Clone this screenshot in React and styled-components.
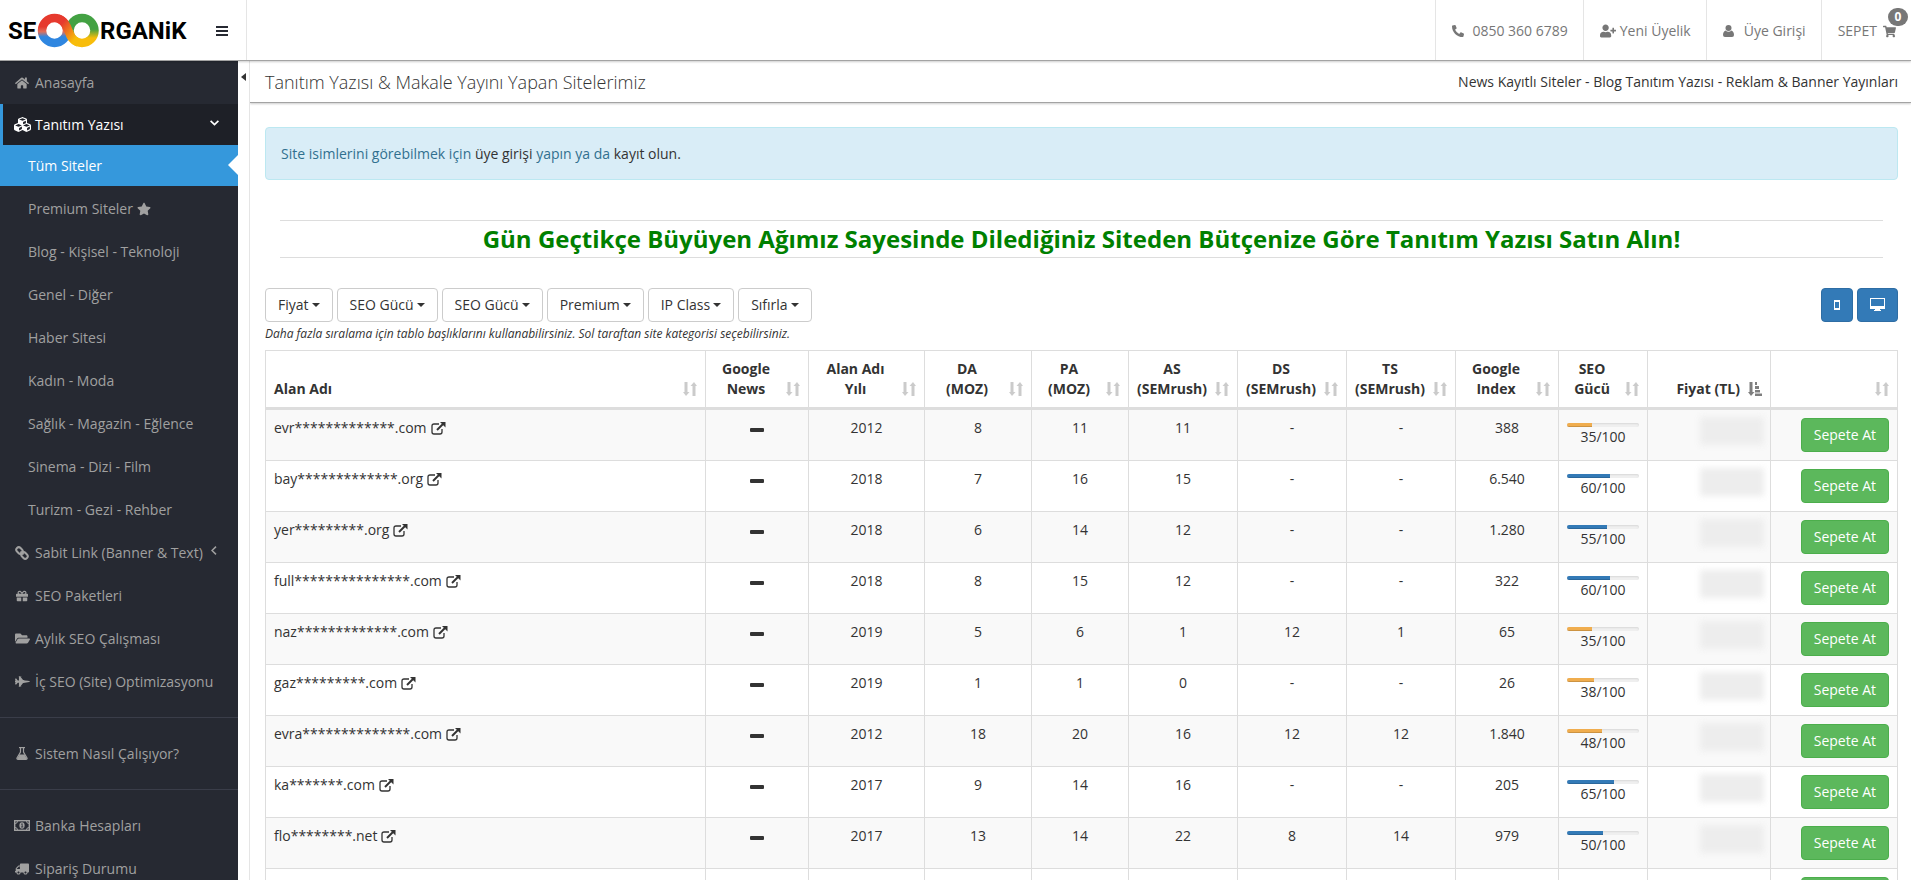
import React from 'react'
import styled, { createGlobalStyle } from 'styled-components'
import {
    FaHome, FaCubes, FaStar, FaGift, FaFolderOpen, FaFighterJet,
    FaTruck, FaUserPlus, FaPhoneAlt, FaShoppingCart,
} from 'react-icons/fa'

const GlobalStyle = createGlobalStyle`
    * {
        box-sizing: border-box;
    }
    body {
        margin: 0;
        overflow-x: hidden;
        background-color: #fff;
        color: #333;
        font-family: "Open Sans", "Noto Sans", sans-serif;
        font-size: 14px;
        line-height: 20px;
    }
    a {
        color: inherit;
        text-decoration: none;
    }
    svg {
        display: block;
        flex: none;
    }
`

const Page = styled.div`
    height: 100vh;
    display: flex;
    flex-direction: column;
    overflow: hidden;
`
const Header = styled.header`
    position: relative;
    z-index: 2;
    height: 61px;
    flex: none;
    display: flex;
    justify-content: space-between;
    border-bottom: 1px solid #a3a3a3;
    box-shadow: 0 1px 2px rgba(0, 0, 0, 0.2);
`
const Brand = styled.div`
    width: 247px;
    display: flex;
    align-items: center;
    justify-content: space-between;
    padding: 2px 18px 0 8px;
    border-right: 1px solid #e5e5e5;
`
const MenuButton = styled.button`
    display: flex;
    padding: 0;
    border: 0;
    background: none;
`
const TopNav = styled.nav`
    display: flex;
`
const TopLink = styled.a`
    position: relative;
    display: flex;
    align-items: center;
    gap: ${props => props.$gap || 8}px;
    padding: 2px 15px 0 16px;
    border-left: 1px solid #e5e5e5;
    color: #777;
`
const Badge = styled.span`
    position: absolute;
    top: 8px;
    right: 3px;
    width: 20px;
    height: 18px;
    border-radius: 10px;
    background-color: #777;
    color: #fff;
    font-size: 12px;
    font-weight: 700;
    line-height: 18px;
    text-align: center;
`

const Body = styled.div`
    flex: 1;
    display: flex;
    min-height: 0;
`
const Sidebar = styled.nav`
    width: 238px;
    flex: none;
    overflow: hidden;
    background-color: #262932;
`
const SideItem = styled.a`
    position: relative;
    display: flex;
    align-items: center;
    height: ${props => props.$open || props.$current ? 41 : 43}px;
    margin-bottom: ${props => props.$current ? 1 : 0}px;
    padding-left: ${props => props.$sub ? 28 : props.$open ? 9 : 12}px;
    border-left: ${props => props.$open ? "3px solid #3598dc" : "0"};
    background-color: ${props => props.$current ? "#3598dc" : props.$open ? "#1e2027" : "transparent"};
    color: ${props => props.$current || props.$open ? "#fff" : "#a0a0a0"};

    &::after {
        content: "";
        display: ${props => props.$current ? "block" : "none"};
        position: absolute;
        right: 0;
        top: 10px;
        border: 10px solid transparent;
        border-left: 0;
        border-right-color: #fff;
    }
`
const SideIcon = styled.span`
    width: 20px;
    margin-right: 3px;
    display: flex;
    justify-content: center;
    font-size: 14px;
`
const SideStar = styled(FaStar)`
    margin-left: 4px;
`
const Truck = styled(FaTruck)`
    transform: scaleX(-1);
`
const SideArrow = styled.span`
    display: flex;
    margin-left: auto;
    padding: 0 ${props => props.$open ? 19 : 21}px 4px 0;
`
const Divider = styled.div`
    height: 1px;
    margin: 14px 0;
    background-color: #3a3d49;
`

const Gutter = styled.div`
    width: 11px;
    flex: none;
    padding: 11px 0 0 3px;
`
const Collapse = styled.button`
    display: block;
    width: 5px;
    height: 10px;
    padding: 0;
    border: 0;
    background: none;

    &::before {
        content: "";
        display: block;
        border: 4px solid transparent;
        border-left: 0;
        border-right: 5px solid #333;
    }
`
const Main = styled.main`
    flex: 1;
    min-width: 0;
    overflow: hidden;
    border-left: 1px solid #e5e5e5;
`
const TitleBar = styled.div`
    height: 42px;
    display: flex;
    align-items: center;
    justify-content: space-between;
    padding: 0 13px 0 15px;
    border-bottom: 1px solid #a3a3a3;
    box-shadow: 0 1px 2px rgba(0, 0, 0, 0.2);
`
const Title = styled.h1`
    margin: 0;
    font-size: 18px;
    font-weight: 300;
`
const Content = styled.div`
    padding: 24px 13px 0 15px;
`
const Alert = styled.div`
    padding: 16px 15px 15px;
    border: 1px solid #bce8f1;
    border-radius: 4px;
    background-color: #d9edf7;
    color: #31708f;

    a {
        color: #333;
    }
`
const Slogan = styled.h2`
    margin: 40px 15px 30px;
    padding: 2px 0;
    border: 1px solid #ddd;
    border-width: 1px 0;
    color: green;
    font-size: 24px;
    font-weight: 700;
    line-height: 32px;
    text-align: center;
`
const Toolbar = styled.div`
    display: flex;
    justify-content: space-between;
`
const Group = styled.div`
    display: flex;
    gap: 4px;
`
const Button = styled.button`
    height: 34px;
    display: inline-flex;
    align-items: center;
    padding: 0 12px;
    border: 1px solid ${props => props.$border || "#ccc"};
    border-radius: 4px;
    background-color: ${props => props.$bg || "#fff"};
    color: ${props => props.$bg ? "#fff" : "#333"};
    font-family: inherit;
    font-size: 14px;
    line-height: 20px;
`
const Caret = styled.span`
    margin-left: 3px;
    border: 4px solid transparent;
    border-top-color: #333;
    border-bottom: 0;
`
const Hint = styled.p`
    margin: 3px 0 7px;
    font-size: 12px;
    font-style: italic;
    line-height: 18px;
`

const Table = styled.table`
    width: 100%;
    table-layout: fixed;
    border-collapse: separate;
    border-spacing: 0;
    border: 1px solid #ddd;
    border-width: 1px 0 0 1px;
`
const Th = styled.th`
    position: relative;
    padding: 8px 30px 8px 8px;
    border: 1px solid #ddd;
    border-width: 0 1px 3px 0;
    text-align: ${props => props.$align || "center"};
    vertical-align: bottom;
    font-weight: 700;
    white-space: pre-line;
`
const SortMark = styled.svg`
    position: absolute;
    right: 8px;
    bottom: 11px;
    opacity: ${props => props.$active ? 0.5 : 0.2};
`
const Row = styled.tr`
    background-color: ${props => props.$odd ? "#f9f9f9" : "#fff"};
`
const Td = styled.td`
    height: 51px;
    padding: 8px;
    border: 1px solid #ddd;
    border-width: 0 1px 1px 0;
    text-align: ${props => props.$align || "center"};
    vertical-align: top;
`
const SiteLink = styled.a`
    display: inline-flex;
    align-items: center;
    gap: 4px;
`
const Minus = styled.span`
    display: block;
    width: 14px;
    height: 4px;
    margin: 10px auto 0;
    border-radius: 1px;
    background-color: #333;
`
const Progress = styled.div`
    height: 4px;
    margin-top: 5px;
    overflow: hidden;
    border-radius: 2px;
    background-color: #f0f0f0;
    box-shadow: inset 0 1px 2px rgba(0, 0, 0, 0.1);
`
const Bar = styled.div`
    height: 100%;
    background-color: ${props => props.$low ? "#f0ad4e" : "#337ab7"};
    box-shadow: inset 0 -1px 0 rgba(0, 0, 0, 0.15);
`
const HiddenPrice = styled.span`
    display: block;
    width: 64px;
    height: 28px;
    margin: -1px -2px 0 auto;
    background-color: #ededed;
    filter: blur(3px);
`

const columns = [
    { label: "Alan Adı", align: "left" },
    { label: "Google\nNews", width: 103 },
    { label: "Alan Adı\nYılı", width: 116 },
    { label: "DA\n(MOZ)", width: 107 },
    { label: "PA\n(MOZ)", width: 97 },
    { label: "AS\n(SEMrush)", width: 109 },
    { label: "DS\n(SEMrush)", width: 109 },
    { label: "TS\n(SEMrush)", width: 109 },
    { label: "Google\nIndex", width: 103 },
    { label: "SEO\nGücü", width: 89 },
    { label: "Fiyat (TL)", width: 123, align: "right", active: true },
    { label: "", width: 127 },
]

const sites = [
    { name: "evr*************.com", data: ["2012", "8", "11", "11", "-", "-", "388"], power: 35 },
    { name: "bay*************.org", data: ["2018", "7", "16", "15", "-", "-", "6.540"], power: 60 },
    { name: "yer*********.org", data: ["2018", "6", "14", "12", "-", "-", "1.280"], power: 55 },
    { name: "full***************.com", data: ["2018", "8", "15", "12", "-", "-", "322"], power: 60 },
    { name: "naz*************.com", data: ["2019", "5", "6", "1", "12", "1", "65"], power: 35 },
    { name: "gaz*********.com", data: ["2019", "1", "1", "0", "-", "-", "26"], power: 38 },
    { name: "evra**************.com", data: ["2012", "18", "20", "16", "12", "12", "1.840"], power: 48 },
    { name: "ka*******.com", data: ["2017", "9", "14", "16", "-", "-", "205"], power: 65 },
    { name: "flo********.net", data: ["2017", "13", "14", "22", "8", "14", "979"], power: 50 },
    { name: "", data: ["", "", "", "", "", "", ""] },
]

const categories = [
    "Blog - Kişisel - Teknoloji",
    "Genel - Diğer",
    "Haber Sitesi",
    "Kadın - Moda",
    "Sağlık - Magazin - Eğlence",
    "Sinema - Dizi - Film",
    "Turizm - Gezi - Rehber",
]

const filters = ["Fiyat", "SEO Gücü", "SEO Gücü", "Premium", "IP Class", "Sıfırla"]

const LogoText = styled.text`
    font-family: Roboto, "Liberation Sans", sans-serif;
    font-size: 24px;
    font-weight: 700;
`

const Logo = () => (
    <svg width="182" height="36" viewBox="0 0 182 36" role="img" aria-label="SEO Organik">
        <defs>
            <linearGradient id="left" x1="0" y1="0" x2="0" y2="1">
                <stop offset="0.350" stopColor="#e63a2e" />
                <stop offset="0.550" stopColor="#e0705c" />
                <stop offset="0.750" stopColor="#2f86e0" />
            </linearGradient>
            <linearGradient id="right" x1="0" y1="0" x2="0" y2="1">
                <stop offset="0.450" stopColor="#43a143" />
                <stop offset="0.800" stopColor="#f8bd0b" />
            </linearGradient>
            <linearGradient id="cross" x1="0" y1="0" x2="1" y2="1">
                <stop offset="0.200" stopColor="#e63a2e" />
                <stop offset="0.850" stopColor="#f8bd0b" />
            </linearGradient>
        </defs>
        <circle cx="46.500" cy="17.500" r="12.500" fill="none" stroke="url(#left)" strokeWidth="8.500" />
        <circle cx="74" cy="17.500" r="12.500" fill="none" stroke="url(#right)" strokeWidth="8.500" />
        <path d="M50 5.500C63 10 58 25 70 29.500" fill="none" stroke="url(#cross)" strokeWidth="8.500" />
        <LogoText x="0" y="26">SE</LogoText>
        <LogoText x="92" y="26">RGANiK</LogoText>
    </svg>
)

const BarsIcon = () => (
    <svg width="12" height="10" viewBox="0 0 12 10" fill="#262932">
        <path d="M0 0H12V2H0ZM0 4H12V6H0ZM0 8H12V10H0Z" />
    </svg>
)

const UserIcon = () => (
    <svg width="11" height="12" viewBox="0 0 11 12" fill="currentColor">
        <circle cx="5.500" cy="3" r="3" />
        <path d="M2.500 5.500Q5.500 8 8.500 5.500Q11 6.500 11 10Q11 12 9 12H2Q0 12 0 10Q0 6.500 2.500 5.500Z" />
    </svg>
)

const ChainIcon = () => (
    <svg width="14" height="14" viewBox="0 0 14 14" fill="none" stroke="currentColor" strokeWidth="2">
        <rect x="1" y="2" width="7" height="5" rx="2.500" transform="rotate(45 4.500 4.500)" />
        <rect x="6" y="7" width="7" height="5" rx="2.500" transform="rotate(45 9.500 9.500)" />
        <path d="M5.500 5.500L8.500 8.500" />
    </svg>
)

const FlaskIcon = () => (
    <svg width="12" height="13" viewBox="0 0 12 13">
        <path d="M3 0.600H9" stroke="currentColor" strokeWidth="1.200" />
        <path d="M4.500 1V5L1 11Q0.500 12.300 2 12.300H10Q11.500 12.300 11 11L7.500 5V1" fill="none" stroke="currentColor" strokeWidth="1.200" />
        <path d="M3.500 7.500H8.500L11 12H1Z" fill="currentColor" />
    </svg>
)

const MoneyIcon = () => (
    <svg width="16" height="11" viewBox="0 0 16 11" fill="none" stroke="currentColor" strokeWidth="1.400">
        <rect x="0.700" y="0.700" width="14.600" height="9.600" />
        <path d="M1 3.500Q3.500 3.500 3.500 1M12.500 1Q12.500 3.500 15 3.500M15 7.500Q12.500 7.500 12.500 10M3.500 10Q3.500 7.500 1 7.500" strokeWidth="1" />
        <ellipse cx="8" cy="5.500" rx="2.600" ry="3.200" fill="currentColor" stroke="none" />
        <path d="M7.200 4.300L8.200 3.700V7M7 7H9.300" stroke="#262932" strokeWidth="0.800" />
    </svg>
)

const SortIcon = ({ active }) => (
    <SortMark width="14" height="14" viewBox="0 0 14 14" fill="#000" $active={active}>
        <path d="M1.500 0H4.500V10H6.500L3 14L0 10H1.500Z" />
        {active
            ? <path d="M7 0H9V3H7ZM7 4H11V7H7ZM7 8H12V10.500H7ZM7 11.500H14V14H7Z" />
            : <path d="M9.500 14H12.500V4H14L11 0L7.500 4H9.500Z" />}
    </SortMark>
)

const ExternalIcon = () => (
    <svg width="15" height="13" viewBox="0 0 15 13" fill="none" stroke="#333">
        <path d="M8 2H3Q1 2 1 4V10Q1 12 3 12H9Q11 12 11 10V7" strokeWidth="1.300" />
        <path d="M6 8L12 2" strokeWidth="2" />
        <path d="M9 0H14.500V5.500Z" fill="#333" stroke="none" />
    </svg>
)

const App = () => {
  return (
    <>
        <GlobalStyle />
        <Page>
            <Header>
                <Brand>
                    <a href="#home"><Logo /></a>
                    <MenuButton aria-label="Menü"><BarsIcon /></MenuButton>
                </Brand>
                <TopNav>
                    <TopLink href="#phone"><FaPhoneAlt size={12} /> 0850 360 6789</TopLink>
                    <TopLink href="#register" $gap={4}><FaUserPlus size={16} /> Yeni Üyelik</TopLink>
                    <TopLink href="#login" $gap={10}><UserIcon /> Üye Girişi</TopLink>
                    <TopLink href="#cart" $gap={6}>
                        SEPET <FaShoppingCart size={13} />
                        <Badge>0</Badge>
                    </TopLink>
                </TopNav>
            </Header>
            <Body>
                <Sidebar>
                    <SideItem href="#home"><SideIcon><FaHome /></SideIcon>Anasayfa</SideItem>
                    <SideItem href="#sites" $open>
                        <SideIcon><FaCubes size={17} /></SideIcon>Tanıtım Yazısı
                        <SideArrow $open>
                            <svg width="9" height="6" viewBox="0 0 9 6" fill="none" stroke="currentColor" strokeWidth="1.700">
                                <path d="M0.600 0.800L4.500 4.600L8.400 0.800" />
                            </svg>
                        </SideArrow>
                    </SideItem>
                    <SideItem href="#all" $sub $current>Tüm Siteler</SideItem>
                    <SideItem href="#premium" $sub>Premium Siteler<SideStar /></SideItem>
                    {categories.map(item => (
                        <SideItem href="#category" $sub key={item}>{item}</SideItem>
                    ))}
                    <SideItem href="#links">
                        <SideIcon><ChainIcon /></SideIcon>Sabit Link (Banner &amp; Text)
                        <SideArrow>
                            <svg width="6" height="9" viewBox="0 0 6 9" fill="none" stroke="currentColor" strokeWidth="1.500">
                                <path d="M5 0.600L1 4.500L5 8.400" />
                            </svg>
                        </SideArrow>
                    </SideItem>
                    <SideItem href="#packages"><SideIcon><FaGift size={12} /></SideIcon>SEO Paketleri</SideItem>
                    <SideItem href="#monthly"><SideIcon><FaFolderOpen size={15} /></SideIcon>Aylık SEO Çalışması</SideItem>
                    <SideItem href="#onsite"><SideIcon><FaFighterJet size={15} /></SideIcon>İç SEO (Site) Optimizasyonu</SideItem>
                    <Divider />
                    <SideItem href="#how"><SideIcon><FlaskIcon /></SideIcon>Sistem Nasıl Çalışıyor?</SideItem>
                    <Divider />
                    <SideItem href="#bank"><SideIcon><MoneyIcon /></SideIcon>Banka Hesapları</SideItem>
                    <SideItem href="#order"><SideIcon><Truck /></SideIcon>Sipariş Durumu</SideItem>
                </Sidebar>
                <Gutter><Collapse aria-label="Menüyü daralt" /></Gutter>
                <Main>
                    <TitleBar>
                        <Title>Tanıtım Yazısı &amp; Makale Yayını Yapan Sitelerimiz</Title>
                        <span>News Kayıtlı Siteler - Blog Tanıtım Yazısı - Reklam &amp; Banner Yayınları</span>
                    </TitleBar>
                    <Content>
                        <Alert>
                            Site isimlerini görebilmek için <a href="#login">üye girişi</a> yapın ya da <a href="#register">kayıt olun.</a>
                        </Alert>
                        <Slogan>Gün Geçtikçe Büyüyen Ağımız Sayesinde Dilediğiniz Siteden Bütçenize Göre Tanıtım Yazısı Satın Alın!</Slogan>
                        <Toolbar>
                            <Group>
                                {filters.map((item, i) => (
                                    <Button key={i}>{item}<Caret /></Button>
                                ))}
                            </Group>
                            <Group>
                                <Button $bg="#337ab7" $border="#2e6da4" aria-label="Mobil">
                                    <svg width="6" height="10" viewBox="0 0 6 10" fill="none" stroke="#fff">
                                        <path d="M0.500 1H5.500V9H0.500Z" />
                                        <path d="M0 1H6M0 9H6" strokeWidth="2" />
                                    </svg>
                                </Button>
                                <Button $bg="#337ab7" $border="#2e6da4" aria-label="Masaüstü">
                                    <svg width="15" height="14" viewBox="0 0 15 14" fill="#fff">
                                        <path fillRule="evenodd" d="M0 0H15V11H10V12H11V13H4V12H5V11H0ZM1 1V8H14V1Z" />
                                    </svg>
                                </Button>
                            </Group>
                        </Toolbar>
                        <Hint>Daha fazla sıralama için tablo başlıklarını kullanabilirsiniz. Sol taraftan site kategorisi seçebilirsiniz.</Hint>
                        <Table>
                            <colgroup>
                                {columns.map((col, i) => <col key={i} width={col.width} />)}
                            </colgroup>
                            <thead>
                                <tr>
                                    {columns.map((col, i) => (
                                        <Th key={i} $align={col.align}>{col.label}<SortIcon active={col.active} /></Th>
                                    ))}
                                </tr>
                            </thead>
                            <tbody>
                                {sites.map((site, i) => (
                                    <Row key={i} $odd={i % 2 === 0}>
                                        <Td $align="left">
                                            {site.name && <SiteLink href="#site">{site.name}<ExternalIcon /></SiteLink>}
                                        </Td>
                                        <Td>{site.name && <Minus />}</Td>
                                        {site.data.map((value, j) => <Td key={j}>{value}</Td>)}
                                        <Td>
                                            {site.power && (
                                                <>
                                                    <Progress><Bar $low={site.power < 50} style={{width: site.power + "%"}} /></Progress>
                                                    {site.power}/100
                                                </>
                                            )}
                                        </Td>
                                        <Td>{site.power && <HiddenPrice />}</Td>
                                        <Td $align="right"><Button $bg="#5cb85c" $border="#4cae4c">Sepete At</Button></Td>
                                    </Row>
                                ))}
                            </tbody>
                        </Table>
                    </Content>
                </Main>
            </Body>
        </Page>
    </>
  )
}

export default App;
